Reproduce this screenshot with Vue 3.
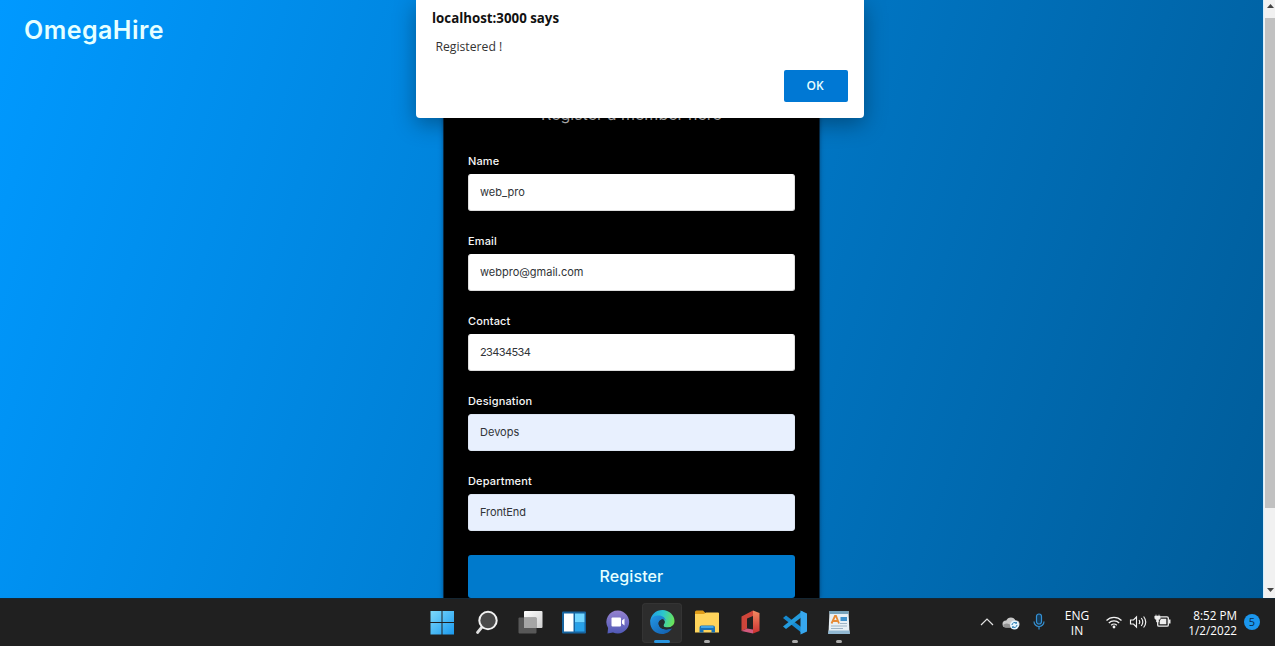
<script setup>
import { ref } from 'vue'

const fields = ref([
  { id: 'name', label: 'Name', value: 'web_pro' },
  { id: 'email', label: 'Email', value: 'webpro@gmail.com' },
  { id: 'contact', label: 'Contact', value: '23434534' },
  { id: 'designation', label: 'Designation', value: 'Devops', filled: true },
  { id: 'department', label: 'Department', value: 'FrontEnd', filled: true }
])
</script>

<template>
  <div class="screen">
    <div class="browser">
      <main class="page">
        <header class="brand">OmegaHire</header>
        <form class="card" @submit.prevent>
          <h1 class="title">Register a member here</h1>
          <div v-for="f in fields" :key="f.id" class="field">
            <label :for="f.id">{{ f.label }}</label>
            <input :id="f.id" v-model="f.value" :class="['input-' + f.id, { filled: f.filled }]" type="text" />
          </div>
          <button class="register" type="submit">Register</button>
        </form>
      </main>
      <div class="scrollbar">
        <svg class="arrow" viewBox="0 0 11 18"><path d="M2 8 5.500 4 9 8z" fill="#444" /></svg>
        <div class="thumb"></div>
        <svg class="arrow bottom" viewBox="0 0 11 18"><path d="M2 8h7L5.500 12z" fill="#444" /></svg>
      </div>
      <section class="dialog" role="alertdialog">
        <h2>localhost:3000 says</h2>
        <p>Registered !</p>
        <button class="ok" type="button">OK</button>
      </section>
    </div>

    <footer class="taskbar">
      <nav class="apps">
        <div class="app">
          <svg viewBox="0 0 40 40">
            <defs><linearGradient id="win" x1="8" y1="9" x2="32" y2="33" gradientUnits="userSpaceOnUse"><stop offset="0" stop-color="#7fdcfb" /><stop offset="1" stop-color="#1998ee" /></linearGradient></defs>
            <path d="M8.500 9h11v11h-11zM20.500 9h11.500v11H20.500zM8.500 21h11v11.500h-11zM20.500 21h11.500v11.500H20.500z" fill="url(#win)" />
          </svg>
        </div>
        <div class="app">
          <svg viewBox="0 0 40 40"><path d="m16 25-4.500 5.500" stroke="#dedede" stroke-width="2.800" stroke-linecap="round" /><circle cx="22" cy="18.500" r="8.700" fill="#4a4a4a" stroke="#f2f2f2" stroke-width="2" /></svg>
        </div>
        <div class="app">
          <svg viewBox="0 0 40 40">
            <defs><linearGradient id="task" x1="0" y1="0" x2="1" y2="1"><stop stop-color="#fff" /><stop offset="1" stop-color="#cfcfcf" /></linearGradient></defs>
            <rect x="14" y="9" width="18.500" height="17" rx="1" fill="url(#task)" /><rect x="8.500" y="15.500" width="18" height="16" rx="1" fill="#626262" opacity=".86" /><path d="M14 15.500h12.500V26H14z" fill="#a5a5a5" />
          </svg>
        </div>
        <div class="app">
          <svg viewBox="0 0 40 40"><rect x="8" y="9.500" width="24" height="22" rx="1" fill="#17649f" /><path d="M10 11.500h9.500v18H10z" fill="#fff" /><path d="M21 11.500h9.500v9H21z" fill="#72d6ff" /><path d="M21 20.500h9.500v9H21z" fill="#28a1e8" /></svg>
        </div>
        <div class="app">
          <svg viewBox="0 0 40 40">
            <defs><linearGradient id="chat" x1="0" y1="0" x2="0" y2="1"><stop stop-color="#9582cf" /><stop offset="1" stop-color="#5059b7" /></linearGradient></defs>
            <path d="M20 8.500A11.500 11.500 0 1 1 15 30.500l-5.500 1 .6-5.500A11.500 11.500 0 0 1 20 8.500z" fill="url(#chat)" /><rect x="13.500" y="15.500" width="9.500" height="9" rx="1" fill="#fff" /><path d="m24 18.500 2.500-2v7L24 21.500z" fill="#fff" />
          </svg>
        </div>
        <div class="app active">
          <svg viewBox="0 0 40 40">
            <defs>
              <linearGradient id="edgeTop" x1="0" y1=".3" x2="1" y2=".5"><stop stop-color="#1f9ee9" /><stop offset=".5" stop-color="#2cc7cc" /><stop offset="1" stop-color="#6be457" /></linearGradient>
              <linearGradient id="edgeLow" x1="0" y1="0" x2="1" y2="1"><stop stop-color="#2397e5" /><stop offset="1" stop-color="#115aa9" /></linearGradient>
            </defs>
            <path d="M8.200 20C8.500 12.500 14 8 20.500 8S32.500 13 32.500 19c0 4-3 6.500-7 6.500-3.500 0-5-1.500-3.500-3.500 2-3-1-6-4.500-6-4 0-7.500 2-9.300 4z" fill="url(#edgeTop)" />
            <path d="M8.200 20c1-5.500 5-6.500 8.500-6.500 4 0 6.500 2.500 7 5-3-3-8 0-7 4 1 4.500 7 6.500 13.500 3.500-2 3.800-6 6-10 6C13 32 8 26.500 8.200 20z" fill="url(#edgeLow)" />
            <path d="M16.700 22.500c-.7-3 2-5.500 5-5 1.200 1.500 1.300 3 .3 4.500-1.400 2 0 3.500 3.500 3.500 2.500 0 4.500-.8 5.500-2.200l-.8 2.700c-6.500 3-12.500 1-13.500-3.500z" fill="#242b2f" />
          </svg>
        </div>
        <div class="app running">
          <svg viewBox="0 0 40 40"><path d="M8 10q0-1.500 1.500-1.500H16l2.500 2.500H31q1 0 1 1v4H8z" fill="#df9c18" /><path d="m17 12 2-1.500h12q1 0 1 1v19H8V12z" fill="#ffd45b" /><path d="M12.500 30.500v-5q0-2 2-2h11.500q2 0 2 2v5h-3.500V28h-8v2.500z" fill="#1972b8" /><path d="M14 24h12.500v2H14z" fill="#42a6e8" /></svg>
        </div>
        <div class="app">
          <svg viewBox="0 0 40 40">
            <defs><linearGradient id="office" x1="0" y1="0" x2="0" y2="1"><stop stop-color="#f48b62" /><stop offset="1" stop-color="#cb3030" /></linearGradient></defs>
            <path d="M10.500 14.500 22 8.500v5.500l-6 2.500v10l-5.500 2.500z" fill="#cf453a" /><path d="m22 8.500 6.500 2.500v18L22 31.500z" fill="url(#office)" /><path d="m10.500 29 5.500-2.500 6 1v4z" fill="#d3597d" />
          </svg>
        </div>
        <div class="app running">
          <svg viewBox="0 0 40 40"><path d="m8 16 3-2.500 16.500 12.500v5.500z" fill="#1689cf" /><path d="m8 24.500 3 2.500 16.500-12.500V9z" fill="#249bdc" /><path d="m25.500 8.500 6.500 3v18l-6.500 3z" fill="#37a7ee" /></svg>
        </div>
        <div class="app running">
          <svg viewBox="0 0 40 40"><path d="M10.500 9h19l1 22H9.500z" fill="#e8f0f5" /><path d="M10.500 9h19v3h-19z" fill="#78a4bc" /><path d="M9.500 28.500h21l.5 3.500H9z" fill="#91b8d2" /><path d="m12.500 21.500 3.500-7.500h1l3 7.500M14 19h5" fill="none" stroke="#e68a35" stroke-width="1.800" /><path d="M21.500 15h6.500v4h-6.500z" fill="#3e91cb" /><path d="M21 21.500h7M12 24h16M12 26.500h12" stroke="#9eb4c5" /></svg>
        </div>
      </nav>

      <div class="tray">
        <svg class="chevron" viewBox="0 0 14 10"><path d="m1 8 6-6 6 6" fill="none" stroke="#e2e2e2" stroke-width="1.200" /></svg>
        <svg class="cloud" viewBox="0 0 18 14"><path d="M4 11.500a3.500 3.500 0 0 1 0-7h.3A5 5 0 0 1 13.500 4.500a3.500 3.500 0 0 1 1 7z" fill="#c9c9c9" /><path d="M1 9Q5 5 12 11.500H4Q2 11.500 1 9z" fill="#929292" /><circle cx="12.500" cy="9" r="4.500" fill="#e6f4fc" /><path d="M10 9a2.700 2.700 0 0 1 4.500-1.800v-1m0 1h-1.300M15 9a2.700 2.700 0 0 1-4.500 1.800v1m0-1h1.300" fill="none" stroke="#267aaf" stroke-width="1" /></svg>
        <svg class="mic" viewBox="0 0 12 17"><rect x="3.500" y="1" width="5" height="10" rx="2.500" fill="#153a57" stroke="#3591d4" stroke-width="1.200" /><path d="M1 8.500a5 5 0 0 0 10 0M6 13.500V16.500" fill="none" stroke="#3591d4" stroke-width="1.200" /></svg>
        <div class="language">ENG<br />IN</div>
        <svg class="wifi" viewBox="0 0 18 14"><g fill="none" stroke="#f2f2f2" stroke-width="1.300"><path d="M1.500 5.500a10.500 10.500 0 0 1 15 0M3.800 8a7.300 7.300 0 0 1 10.400 0M6.200 10.300a4 4 0 0 1 5.600 0" /></g><circle cx="9" cy="12" r="1.400" fill="#f2f2f2" /></svg>
        <svg class="sound" viewBox="0 0 18 14"><g fill="none" stroke="#f2f2f2" stroke-width="1.150"><path d="M1.500 5h3l3-3v10l-3-3h-3zM10 5q1.500 2 0 4M12.300 3q3 4 0 8M14.600 1.500q4.300 5.500 0 11" /></g></svg>
        <svg class="battery" viewBox="0 0 17 14"><path d="M6.500 2.800H13q1.300 0 1.300 1.300v6.800q0 1.300-1.300 1.300H5q-1.300 0-1.300-1.300V7.500" fill="none" stroke="#eee" stroke-width="1.300" /><path d="M7 4.800h5.300v5.400H5.700V7zM15 5.500h1.500v4H15z" fill="#eee" /><path d="M2 .5V2m3-1.500V2M.8 2h5.500v2.500L4.500 6v2h-2V6L.8 4.500z" fill="#eee" stroke="#eee" stroke-width=".6" /></svg>
        <div class="clock">8:52 PM<br />1/2/2022</div>
        <div class="badge">5</div>
      </div>
    </footer>
  </div>
</template>

<style>
body { overflow: hidden; }
</style>

<style scoped>
* { box-sizing: border-box; }
.screen { width: 1275px; height: 646px; overflow: hidden; display: flex; flex-direction: column; font-family: Inter, "Liberation Sans", sans-serif; }
.browser { position: relative; height: 598px; display: flex; }
.page { width: 1263px; height: 598px; display: grid; grid-template-columns: 443px 377px 1fr; background: linear-gradient(108deg, #0099ff, #005c99); overflow: hidden; }
.brand { padding: 13px 0 0 24px; height: 50px; color: #e5ffff; font-size: 25px; font-weight: 600; line-height: 34px; letter-spacing: .46px; }
.card { height: 598px; padding: 103px 24px 0; background: #000; border-right: 1px solid #062b48; border-left: 1px solid #062b48; box-shadow: 0 0 4px rgba(0, 35, 70, .5); }
.title { margin: 0 0 27px; color: #ccc; font-size: 16px; line-height: 22px; font-weight: 400; text-align: center; white-space: nowrap; }
.field { height: 80px; padding-top: 1px; }
.field label { display: block; height: 21px; color: #f7f7f7; font-size: 11px; line-height: 16px; font-weight: 500; letter-spacing: .15px; }
.field input { display: block; width: 327px; height: 37px; padding: 0 11px 1px; border: 1px solid #ddd; border-top-color: #fff; border-radius: 3px; background: #fff; color: #303438; font: 400 11px Inter, sans-serif; outline: none; }
.field input.filled { background: #e8f0fe; border-color: #dce5f2; }
.field .input-contact { letter-spacing: -.6px; }
.field .input-name { letter-spacing: .05px; }
.field .input-devops, .field .input-department { letter-spacing: -.1px; }
.register { display: block; width: 327px; height: 43px; margin-top: 3px; padding: 0 0 2px; border: 0; border-radius: 3px; background: #007acc; color: #e5ffff; font: 500 16px Inter, sans-serif; letter-spacing: .1px; }
.scrollbar { width: 12px; height: 598px; display: flex; flex-direction: column; background: #f1f1f1; border-left: 1px solid #d5eefd; padding-left: 1px; }
.arrow { width: 11px; height: 18px; display: block; }
.arrow.bottom { margin-top: auto; }
.thumb { height: 490px; background: #c1c1c1; }
.dialog { position: absolute; left: 416px; top: 0; width: 448px; height: 118px; background: #fff; border-radius: 0 0 4px 4px; padding: 8px 16px; box-shadow: 0 6px 22px rgba(0, 0, 0, .34); font-family: "Open Sans", sans-serif; }
.dialog h2 { margin: 0; font-size: 13.3px; line-height: 20px; font-weight: 700; color: #111; }
.dialog p { margin: 9px 0 0 3.500px; color: #333; font-size: 12.2px; line-height: 20px; }
.ok { display: block; width: 64px; height: 32px; margin: 13px 0 0 auto; padding: 0 2px 1px 0; border: 0; border-radius: 2px; background: #0078d4; color: #e7ffff; font: 600 12px "Open Sans", sans-serif; }
.taskbar { height: 48px; display: flex; justify-content: flex-end; background: #202020; border-top: 1px solid #142632; color: #fff; }
.apps { width: 440px; display: flex; gap: 4.100px; margin-right: 118px; padding-top: 4px; }
.app { position: relative; flex: 0 0 40px; height: 40px; border-radius: 4px; }
.app svg { display: block; width: 40px; height: 40px; margin-top: -1px; }
.app { padding-top: .1px; }
.active { background: #2d2d2d; box-shadow: inset 0 0 0 1px #343434; }
.active::after, .running::after { content: ""; position: absolute; left: 17px; bottom: 0; width: 6px; height: 3px; border-radius: 2px; background: #aaa; }
.active::after { left: 12px; width: 16px; background: #2995df; }
.tray { width: 295px; display: flex; align-items: flex-start; font-family: "Open Sans", sans-serif; font-size: 12px; line-height: 15px; }
.tray svg, .tray div { flex: none; }
.chevron { width: 14px; height: 10px; margin-top: 18px; }
.cloud { width: 18px; height: 14px; margin: 17px 0 0 8px; }
.mic { width: 12px; height: 17px; margin: 14px 0 0 13px; }
.language { width: 36px; margin: 9px 0 0 14px; text-align: center; }
.wifi { width: 18px; height: 14px; margin: 16px 0 0 10px; }
.sound { width: 18px; height: 14px; margin: 16px 0 0 6px; }
.battery { width: 17px; height: 14px; margin: 15px 0 0 7px; }
.clock { width: 65px; margin: 9px 0 0 1px; text-align: right; font-size: 11.700px; }
.badge { width: 16px; height: 16px; margin: 15px 0 0 7px; border-radius: 50%; background: #1b96ed; color: #092b46; font-size: 11px; text-align: center; line-height: 16px; }
</style>
